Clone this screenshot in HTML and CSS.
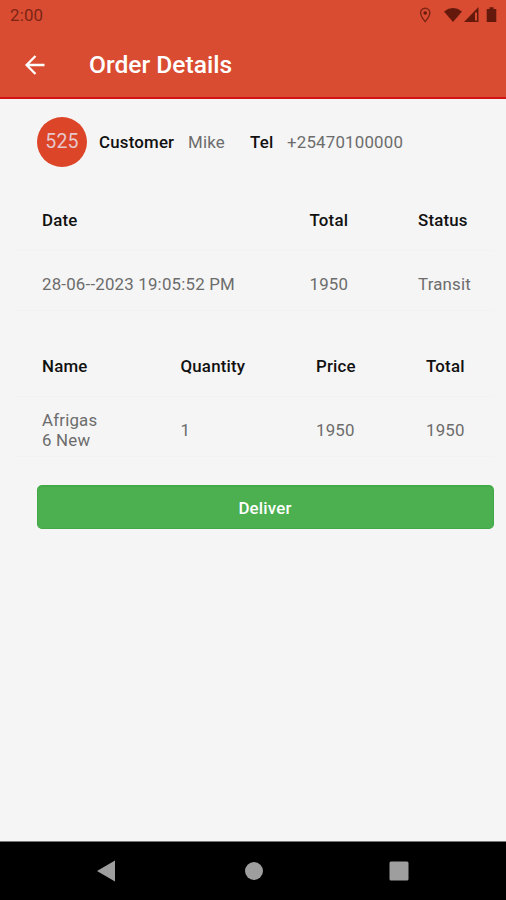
FILE: index.html
```html
<!DOCTYPE html>
<html lang="en">
<head>
<meta charset="utf-8">
<title>Order Details</title>
<link rel="stylesheet" href="styles.css">
</head>
<body>
<div class="screen">
  <header class="header">
    <div class="status-bar">
      <span class="clock">2:00</span>
      <svg class="status-icons" width="80" height="20" viewBox="0 0 80 20" fill="#65190c">
        <path d="M6.2 3.2a4.600 4.600 0 0 0-4.600 4.600c0 3.500 4.600 8.800 4.600 8.800s4.600-5.300 4.600-8.800a4.600 4.600 0 0 0-4.600-4.600z" fill="none" stroke="#7c2415" stroke-width="1.400"/>
        <circle cx="6.2" cy="8" r="1.800"/>
        <path d="M25 6.500Q34 -.4 43 6.500L34 17z"/>
        <path d="M59.500 2v15H45z"/>
        <path d="M56 7.500h2v8h-2z" fill="#d94c31"/>
        <path d="M67.700 4h2.800V2.200h4V4h2.800v13h-9.600z"/>
      </svg>
    </div>
    <div class="app-bar">
      <svg class="back" width="20" height="20" viewBox="0 0 20 20" fill="none" stroke="#fff" stroke-width="2.300"><path d="M19.500 10H2M10.500 1L1.600 10l8.900 9"/></svg>
      <h1 class="title">Order Details</h1>
    </div>
  </header>
  <main class="content">
    <section class="customer">
      <span class="avatar">525</span>
      <b class="customer-label">Customer</b>
      <span class="customer-name">Mike</span>
      <b class="tel-label">Tel</b>
      <span>+25470100000</span>
    </section>
    <section class="table summary">
      <div class="row head"><span>Date</span><span>Total</span><span>Status</span></div>
      <div class="row"><span>28-06--2023 19:05:52 PM</span><span>1950</span><span>Transit</span></div>
    </section>
    <section class="table items">
      <div class="row head"><span>Name</span><span>Quantity</span><span>Price</span><span>Total</span></div>
      <div class="row"><span>Afrigas<br>6 New</span><span>1</span><span>1950</span><span>1950</span></div>
    </section>
    <button class="deliver">Deliver</button>
  </main>
  <nav class="nav-bar">
    <svg width="18" height="22" viewBox="0 0 18 22" fill="#9e9e9e"><path d="M0 11L18 .5v21z"/></svg>
    <svg class="home" width="18" height="18" viewBox="0 0 18 18" fill="#9e9e9e"><circle cx="9" cy="9" r="9"/></svg>
    <svg width="20" height="20" viewBox="0 0 20 20" fill="#9e9e9e"><rect x=".5" y=".5" width="19" height="19" rx="1.500"/></svg>
  </nav>
</div>
</body>
</html>
```
FILE: styles.css
```css
* { box-sizing: border-box; }
body {
  margin: 0;
  background: #f5f5f5;
  font: 400 16.850px/20px Roboto, sans-serif;
  letter-spacing: 0.2px;
  color: #6c6c6c;
}
.screen { display: flex; flex-direction: column; height: 900px; }
.header { height: 99px; background: #d94c31; border-bottom: 2px solid #d01212; }
.status-bar {
  display: flex;
  justify-content: space-between;
  height: 32px;
  padding: 5px 7px 0 10px;
  color: #7c2415;
}
.app-bar { display: flex; align-items: center; height: 66px; padding-left: 25px; }
.title {
  margin: 0 0 0 44px;
  font-size: 24.600px;
  line-height: 30px;
  font-weight: 500;
  letter-spacing: 0;
  color: #fff;
}
.content { flex: 1; display: flex; flex-direction: column; }
.customer { display: flex; align-items: center; height: 85px; padding-left: 37px; }
.avatar {
  display: grid;
  place-items: center;
  width: 50px;
  height: 50px;
  margin: 0 12px 0 0;
  border-radius: 50%;
  background: #dc4527;
  color: #e8c6cb;
  font-size: 19.500px;
}
b { font-weight: 500; color: #111; }
.customer-label { width: 89px; }
.customer-name { width: 62px; }
.tel-label { width: 37px; }
.table { margin: 0 12px 0 14px; }
.row { display: grid; align-items: center; height: 60px; padding-left: 28px; border-bottom: 1px solid #f2f2f2; }
.head { height: 62px; font-weight: 500; color: #111; }
.summary { margin-top: 5px; }
.row:last-child { padding-top: 8px; }
.summary .row { grid-template-columns: 267.500px 108.500px 1fr; }
.summary .row:last-child { padding-top: 6px; }
.items { margin-top: 24px; }
.items .row { grid-template-columns: 138.500px 135.500px 110px 1fr; }
.items .row:last-child { line-height: 19.500px; }
.deliver {
  height: 44px;
  margin: 28px 12px 0 37px;
  padding: 0 1px 0 0;
  border: 1px solid #43a947;
  border-top-width: 2px;
  border-radius: 5px;
  background: #4caf50;
  color: #fff;
  font: inherit;
  font-weight: 500;
  letter-spacing: inherit;
}
.nav-bar {
  display: flex;
  align-items: center;
  justify-content: space-between;
  height: 59px;
  padding: 0 97px;
  background: #000;
  border-top: 1px solid #777;
}
.home { margin-left: 3px; }
```
